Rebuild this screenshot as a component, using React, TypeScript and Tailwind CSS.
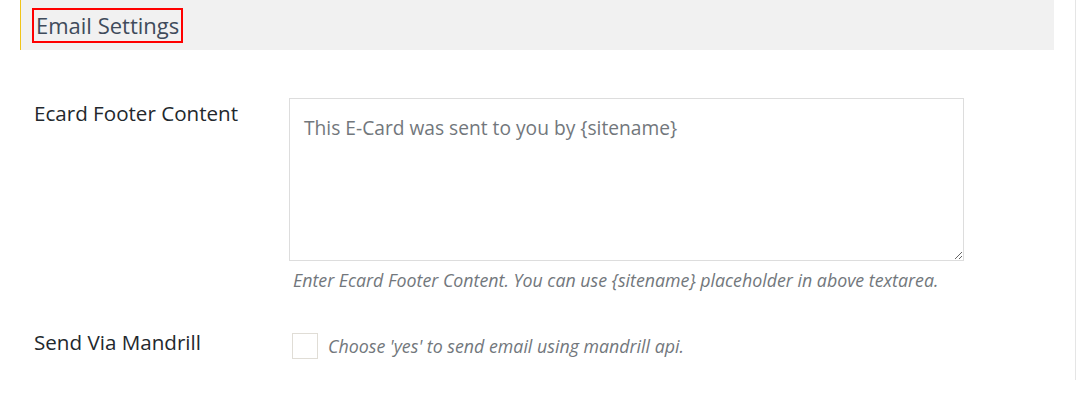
export default function App() {
  return (
    <div className="w-[1076px] h-[401px] bg-white" style={{ fontFamily: '"Open Sans", sans-serif' }}>
      <div className="h-[380px] border-r border-[#e5e5e5] pl-[20px] pr-[21px]">
        {/* Section header */}
        <div className="h-[50px] bg-[#f1f1f1] border-l border-[#f0c419] flex items-center pl-[11px]">
          <h3 className="border-2 border-[#ff0000] px-[2px] text-[22px] leading-[31px] text-[#3f4b5b] font-normal">
            Email Settings
          </h3>
        </div>

        {/* Ecard footer row */}
        <div className="flex mt-[48px]">
          <div className="w-[269px] pl-[14px] pt-[1px] text-[20.6px] leading-[29px] text-[#23282d]">
            Ecard Footer Content
          </div>
          <div className="w-[675px]">
            <textarea
              className="block w-[675px] h-[163px] border border-[#dddddd] px-[14px] pt-[16px] pb-[14px] text-[19.2px] leading-[26px] text-[#72777c] resize-y outline-none"
              defaultValue="This E-Card was sent to you by {sitename}"
            />
            <p className="mt-[7px] pl-[4px] italic text-[17.8px] leading-[25px] text-[#72777c]">
              Enter Ecard Footer Content. You can use {'{sitename}'} placeholder in above textarea.
            </p>
          </div>
        </div>

        {/* Mandrill row */}
        <div className="flex items-start mt-[35px]">
          <div className="w-[269px] pl-[14px] text-[20.6px] leading-[29px] text-[#23282d]">
            Send Via Mandrill
          </div>
          <label className="flex items-center gap-[10px] pl-[3px] mt-[5px]">
            <span className="w-[26px] h-[26px] border border-[#e0ddd6] bg-white" />
            <span className="italic text-[17.8px] leading-[25px] text-[#72777c]">
              Choose 'yes' to send email using mandrill api.
            </span>
          </label>
        </div>
      </div>
    </div>
  );
}
